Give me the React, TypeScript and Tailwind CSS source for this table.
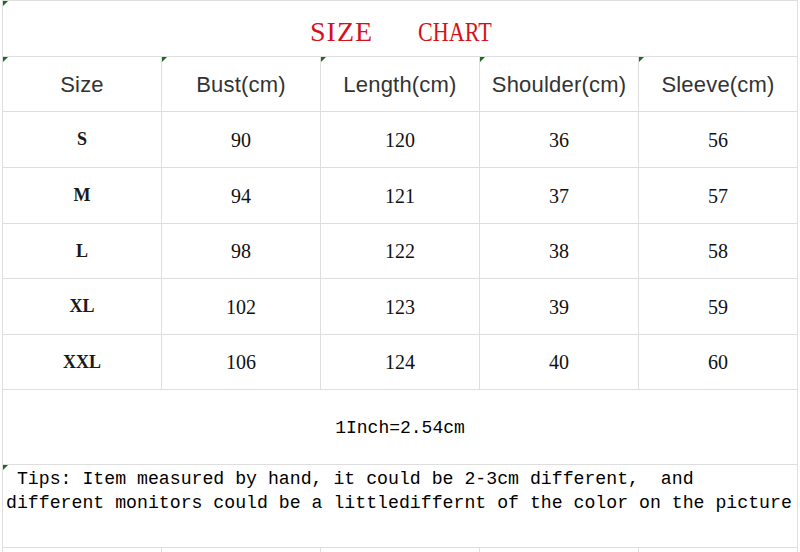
const headers = ["Size", "Bust(cm)", "Length(cm)", "Shoulder(cm)", "Sleeve(cm)"];

const rows = [
  { size: "S", values: ["90", "120", "36", "56"], h: "h-[56px]" },
  { size: "M", values: ["94", "121", "37", "57"], h: "h-[56px]" },
  { size: "L", values: ["98", "122", "38", "58"], h: "h-[55px]" },
  { size: "XL", values: ["102", "123", "39", "59"], h: "h-[56px]" },
  { size: "XXL", values: ["106", "124", "40", "60"], h: "h-[55px]" },
];

function Mark() {
  return (
    <span className="absolute left-0 top-0 w-0 h-0 border-t-[5px] border-t-[#1d6b1d] border-r-[5px] border-r-transparent" />
  );
}

function Cell({
  children,
  mark,
  last,
  className = "",
}: {
  children?: React.ReactNode;
  mark?: boolean;
  last?: boolean;
  className?: string;
}) {
  return (
    <div
      className={`relative w-[159px] h-full flex items-center justify-center border-b border-r ${
        last ? "border-r-[#e7dfca]" : "border-r-[#dedede]"
      } border-b-[#dedede] ${className}`}
    >
      {mark && <Mark />}
      {children}
    </div>
  );
}

export default function App() {
  return (
    <div className="w-[800px] h-[552px] overflow-hidden bg-white">
      <div className="ml-[2px] w-[796px] border-l border-t border-[#dedede]">
        {/* Title */}
        <div className="relative h-[56px] flex items-center border-b border-r border-b-[#dedede] border-r-[#e7dfca] pt-[6px] pl-[307px]">
          <Mark />
          <span
            className="text-[28px] tracking-[1px] text-[#d4121c]"
            style={{ fontFamily: '"Liberation Serif", serif' }}
          >
            SIZE
          </span>
          <span
            className="ml-[45px] inline-block origin-left scale-x-[0.79] text-[28px] text-[#d4121c]"
            style={{ fontFamily: '"Liberation Serif", serif' }}
          >
            CHART
          </span>
        </div>

        {/* Header */}
        <div className="flex h-[55px]">
          {headers.map((h, i) => (
            <Cell key={h} mark last={i === 4}>
              <span
                className="text-[22px] text-[#333] tracking-[0.2px]"
                style={{ fontFamily: '"Liberation Sans", Arial, sans-serif' }}
              >
                {h}
              </span>
            </Cell>
          ))}
        </div>

        {/* Data rows */}
        {rows.map((r) => (
          <div key={r.size} className={`flex ${r.h}`}>
            <Cell>
              <span
                className="text-[18px] font-bold text-[#1a1a1a]"
                style={{ fontFamily: '"Liberation Serif", serif' }}
              >
                {r.size}
              </span>
            </Cell>
            {r.values.map((v, i) => (
              <Cell key={i} last={i === 3}>
                <span
                  className="text-[20px] text-[#111]"
                  style={{ fontFamily: '"Liberation Serif", serif' }}
                >
                  {v}
                </span>
              </Cell>
            ))}
          </div>
        ))}

        {/* Inch conversion */}
        <div className="h-[75px] flex items-center justify-center border-b border-r border-b-[#dedede] border-r-[#e7dfca] pt-[2px]">
          <span
            className="text-[18px] text-black"
            style={{ fontFamily: '"Liberation Mono", monospace' }}
          >
            1Inch=2.54cm
          </span>
        </div>

        {/* Tips */}
        <div className="relative h-[83px] border-b border-r border-b-[#dedede] border-r-[#e7dfca] pl-[3px] pt-[2px]">
          <Mark />
          <p
            className="whitespace-pre text-[18.2px] leading-[24px] text-black"
            style={{ fontFamily: '"Liberation Mono", monospace' }}
          >
            {" Tips: Item measured by hand, it could be 2-3cm different,  and\ndifferent monitors could be a littlediffernt of the color on the picture"}
          </p>
        </div>

        {/* Trailing row */}
        <div className="flex h-[20px]">
          {headers.map((h, i) => (
            <Cell key={h} last={i === 4} />
          ))}
        </div>
      </div>
    </div>
  );
}
